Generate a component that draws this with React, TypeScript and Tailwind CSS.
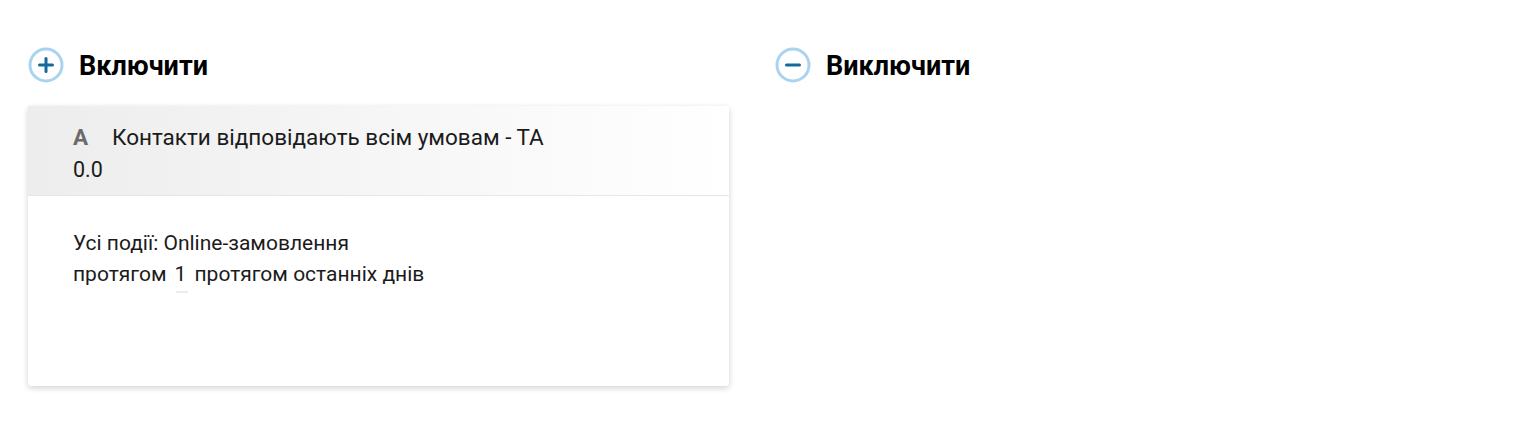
function CircleIcon({ minus }: { minus?: boolean }) {
  return (
    <svg width="36" height="36" viewBox="0 0 36 36" className="shrink-0">
      <circle cx="18" cy="18" r="16" fill="white" stroke="#a9d3ef" strokeWidth="3" />
      <path d="M11.5 18h13" stroke="#15689a" strokeWidth="3" strokeLinecap="round" />
      {!minus && <path d="M18 11.5v13" stroke="#15689a" strokeWidth="3" strokeLinecap="round" />}
    </svg>
  );
}

export default function App() {
  return (
    <div className="flex min-h-[423px] bg-white pt-[47px] font-['Roboto',sans-serif] text-[#1b1b1b]">
      <section className="ml-[28px] w-[701px]">
        <div className="flex h-[36px] items-center gap-[15px]">
          <CircleIcon />
          <h2 className="pt-[2px] text-[27px] leading-[36px] font-bold text-black">Включити</h2>
        </div>
        <div className="mt-[23px] h-[280px] w-[701px] rounded-[3px] bg-white shadow-[0_2px_6px_rgba(0,0,0,0.18)]">
          <div className="h-[90px] border-b border-[#e6e6e6] bg-gradient-to-r from-[#ededed] to-white pl-[45px] pt-[15px]">
            <div className="flex text-[22.5px] leading-[32px]">
              <span className="w-[39px] font-bold text-[#6b6b6b]">A</span>
              <span>Контакти відповідають всім умовам - ТА</span>
            </div>
            <div className="text-[21.5px] leading-[33px]">0.0</div>
          </div>
          <div className="pl-[45px] pt-[32px] text-[21px] leading-[31px]">
            <div>Усі події: Online-замовлення</div>
            <div className="flex">
              <span>протягом</span>
              <span className="relative mx-[8px] inline-block w-[12px] text-center">
                1
                <span className="absolute bottom-[-3px] left-[2px] h-[2px] w-[12px] bg-[#ececec]" />
              </span>
              <span>протягом останніх днів</span>
            </div>
          </div>
        </div>
      </section>
      <section className="ml-[46px]">
        <div className="flex h-[36px] items-center gap-[15px]">
          <CircleIcon minus />
          <h2 className="pt-[2px] text-[27px] leading-[36px] font-bold text-black">Виключити</h2>
        </div>
      </section>
    </div>
  );
}
